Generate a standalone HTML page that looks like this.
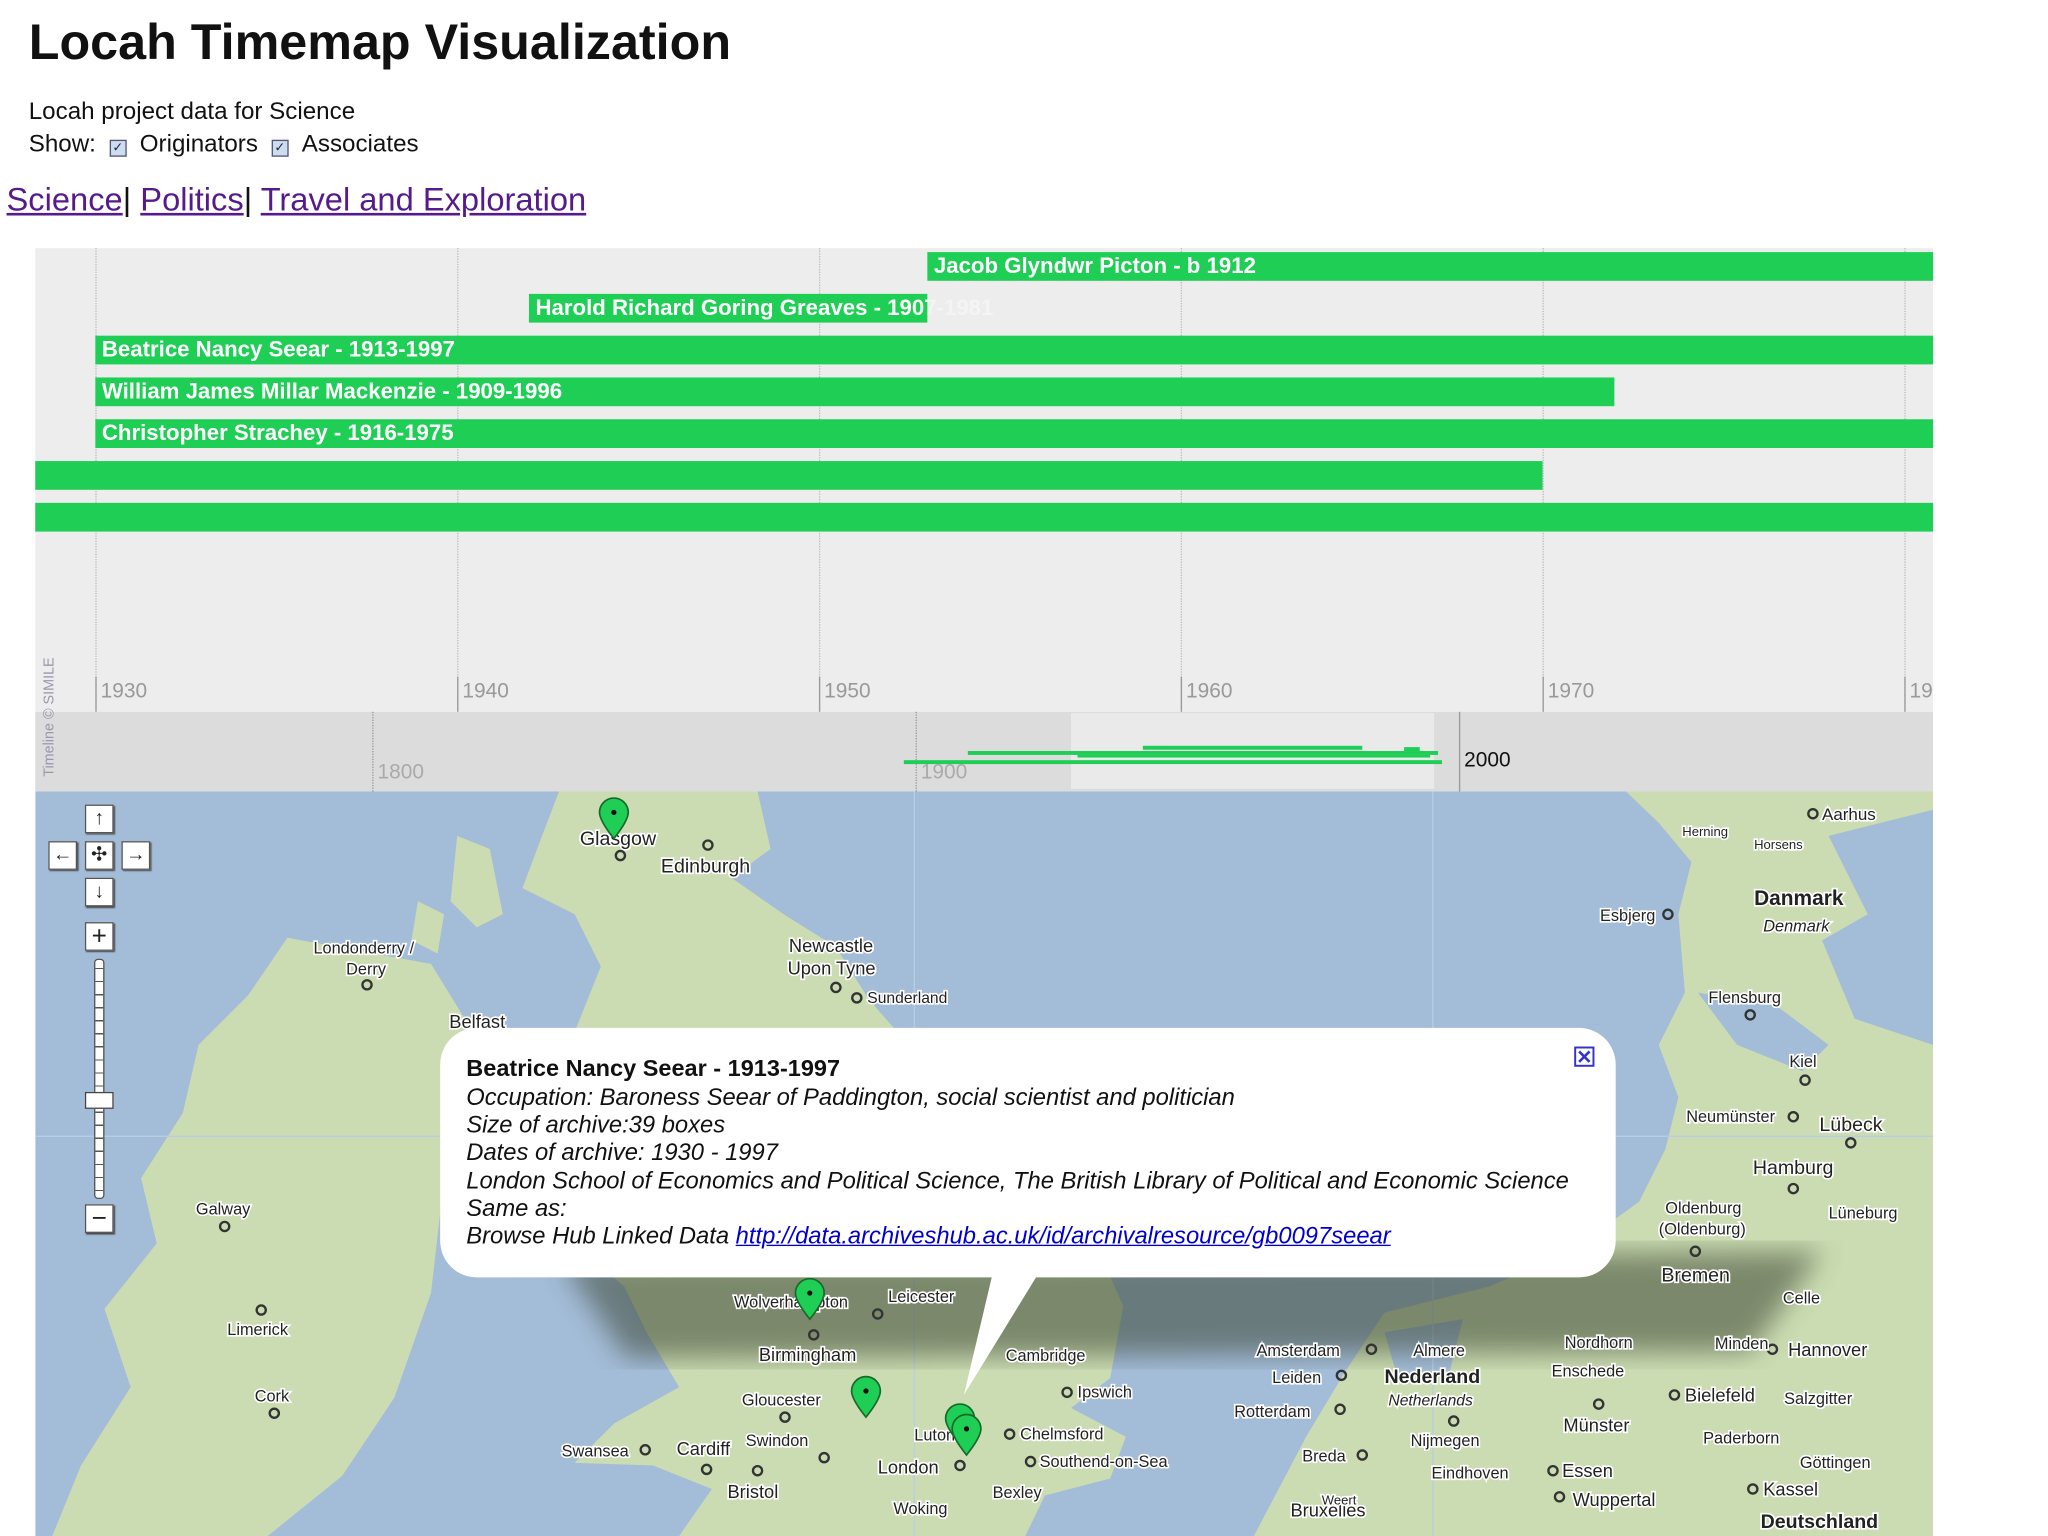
<!DOCTYPE html>
<html><head><meta charset="utf-8"><style>
html,body{margin:0;padding:0;background:#fff;overflow:hidden;width:2048px;height:1536px}
#w{position:absolute;left:0;top:0;width:1568px;height:1176px;transform:scale(1.30612);transform-origin:0 0;font-family:"Liberation Sans",sans-serif;color:#111}
.a{position:absolute;white-space:nowrap}
.bar{position:absolute;height:22px;background:#1fce55;color:#fff;font-size:17px;font-weight:bold;line-height:22px;padding-left:5px;box-sizing:border-box;white-space:nowrap}
.g{position:absolute;top:190px;height:355px;border-left:1px dotted #bbb}
.yl{position:absolute;top:518px;height:27px;border-left:1px solid #999;color:#999;font-size:16px;padding-left:3px;line-height:24px}
.btn{position:absolute;width:20px;height:20px;border:1px solid #555;background:#fff;box-shadow:1px 1px 1px #444;font-size:15px;line-height:20px;text-align:center;color:#222}
.c{font-size:12.5px;fill:#222;stroke:#fff;stroke-width:2.5px;paint-order:stroke}
.p{position:absolute;font-size:18.2px;font-style:italic;line-height:21px}
</style></head><body><div id="w">
<div class="a" style="left:22px;top:11px;font-size:38.5px;font-weight:bold">Locah Timemap Visualization</div>
<div class="a" style="left:22px;top:74px;font-size:18.5px">Locah project data for Science</div>
<div class="a" style="left:22px;top:99px;font-size:18.5px">Show: &nbsp;<span style="display:inline-block;width:11px;height:11px;border:1px solid #557;background:#cde;vertical-align:0px;font-size:10px;line-height:11px;text-align:center;color:#225">✓</span> &nbsp;Originators &nbsp;<span style="display:inline-block;width:11px;height:11px;border:1px solid #557;background:#cde;vertical-align:0px;font-size:10px;line-height:11px;text-align:center;color:#225">✓</span> &nbsp;Associates</div>
<div class="a" style="left:5px;top:139px;font-size:25px;color:#551a8b"><u>Science</u><span style="color:#111">|</span> <u>Politics</u><span style="color:#111">|</span> <u>Travel and Exploration</u></div>

<div class="a" style="left:27px;top:190px;width:1453px;height:355px;background:#ededed"></div>
<div class="g" style="left:73px"></div><div class="g" style="left:350px"></div><div class="g" style="left:627px"></div><div class="g" style="left:904px"></div><div class="g" style="left:1181px"></div><div class="g" style="left:1458px"></div>
<div class="yl" style="left:73px">1930</div><div class="yl" style="left:350px">1940</div><div class="yl" style="left:627px">1950</div><div class="yl" style="left:904px">1960</div><div class="yl" style="left:1181px">1970</div><div class="yl" style="left:1458px;width:20px;overflow:hidden">19</div>
<div class="bar" style="left:710px;top:193px;width:770px">Jacob Glyndwr Picton - b 1912</div>
<div class="bar" style="left:405px;top:225px;width:305px;overflow:visible">Harold Richard Goring Greaves - 19<span style="color:#f4f4f4">07-1981</span></div>
<div class="bar" style="left:73px;top:257px;width:1407px">Beatrice Nancy Seear - 1913-1997</div>
<div class="bar" style="left:73px;top:289px;width:1163px">William James Millar Mackenzie - 1909-1996</div>
<div class="bar" style="left:73px;top:321px;width:1407px">Christopher Strachey - 1916-1975</div>
<div class="bar" style="left:27px;top:353px;width:1154px"></div>
<div class="bar" style="left:27px;top:385px;width:1453px"></div>

<div class="a" style="left:27px;top:545px;width:1453px;height:61px;background:#dcdcdc"></div>
<div class="a" style="left:820px;top:546px;width:278px;height:58px;background:#eaeaea"></div>
<div class="yl" style="left:285px;top:545px;height:61px;line-height:94px;border-left:1px dotted #999;color:#aaa">1800</div>
<div class="yl" style="left:701px;top:545px;height:61px;line-height:94px;border-left:1px dotted #999;color:#aaa">1900</div>
<div class="yl" style="left:1117px;top:545px;height:61px;line-height:76px;border-left:1px solid #999;color:#111">2000</div>
<div class="a" style="left:692px;top:582px;width:412px;height:3px;background:#1fce55"></div>
<div class="a" style="left:741px;top:575px;width:360px;height:3px;background:#1fce55"></div>
<div class="a" style="left:825px;top:578px;width:270px;height:2px;background:#1fce55"></div>
<div class="a" style="left:875px;top:571px;width:168px;height:3px;background:#1fce55"></div>
<div class="a" style="left:1075px;top:572px;width:12px;height:3px;background:#1fce55"></div>
<div class="a" style="left:-17px;top:543px;font-size:11px;color:#99a;transform:rotate(-90deg);width:110px;text-align:center">Timeline © SIMILE</div>

<svg class="a" style="left:27px;top:606px" width="1453" height="570" viewBox="27 606 1453 570">
<defs><filter id="bl"><feGaussianBlur stdDeviation="10"/></filter></defs>
<rect x="27" y="606" width="1453" height="570" fill="#a3bcd8"/>
<path d="M428 606 L580 606 L590 650 L560 672 L600 700 L640 725 L665 765 L700 805 L725 860 L785 905 L840 955 L860 1000 L850 1055 L820 1078 L862 1100 L850 1132 L800 1145 L785 1176 L520 1176 L545 1140 L500 1122 L440 1120 L470 1090 L520 1062 L495 1020 L478 985 L430 945 L468 905 L445 862 L402 822 L440 790 L460 740 L440 700 L400 680 L415 640 Z" fill="#cbdcb2"/>
<path d="M350 640 L375 650 L385 700 L365 710 L345 690 Z M320 690 L340 700 L335 730 L315 720 Z" fill="#cbdcb2"/>
<path d="M220 718 L330 738 L362 790 L346 852 L338 920 L330 990 L302 1070 L262 1130 L205 1176 L40 1176 L62 1122 L100 1062 L80 1002 L120 952 L108 902 L140 852 L152 800 L190 762 Z" fill="#cbdcb2"/>
<path d="M1245 606 L1480 606 L1480 1176 L960 1176 L1000 1100 L1030 1050 L1060 1005 L1140 985 L1200 960 L1255 920 L1275 880 L1285 840 L1270 800 L1290 760 L1285 700 L1295 660 L1270 630 Z" fill="#cbdcb2"/>
<path d="M1400 640 L1480 620 L1480 800 L1420 780 L1395 720 L1430 700 Z" fill="#a3bcd8"/>
<path d="M1300 760 L1360 770 L1400 800 L1380 820 L1330 800 Z" fill="#a3bcd8"/>
<path d="M1060 1020 L1120 1010 L1110 1050 L1070 1055 Z" fill="#a3bcd8"/>
<line x1="27" y1="870" x2="1480" y2="870" stroke="#b8cde4" stroke-width="1"/>
<line x1="700" y1="606" x2="700" y2="1176" stroke="#b8cde4" stroke-width="1"/>
<line x1="1097" y1="606" x2="1097" y2="1176" stroke="#b8cde4" stroke-width="1"/>
<path d="M430 965 L1395 958 L1340 1035 L480 1040 Z" fill="#3a4432" opacity="0.55" filter="url(#bl)"/>
<g fill="none" stroke="#333" stroke-width="1.8">
<circle cx="475" cy="655" r="3.5"/><circle cx="542" cy="647" r="3.5"/><circle cx="281" cy="754" r="3.5"/><circle cx="640" cy="756" r="3.5"/><circle cx="656" cy="764" r="3.5"/><circle cx="172" cy="939" r="3.5"/><circle cx="200" cy="1003" r="3.5"/><circle cx="210" cy="1082" r="3.5"/><circle cx="623" cy="1022" r="3.5"/><circle cx="672" cy="1006" r="3.5"/><circle cx="601" cy="1085" r="3.5"/><circle cx="494" cy="1110" r="3.5"/><circle cx="541" cy="1125" r="3.5"/><circle cx="580" cy="1126" r="3.5"/><circle cx="631" cy="1116" r="3.5"/><circle cx="735" cy="1122" r="3.5"/><circle cx="773" cy="1098" r="3.5"/><circle cx="789" cy="1119" r="3.5"/><circle cx="817" cy="1066" r="3.5"/><circle cx="1277" cy="700" r="3.5"/><circle cx="1388" cy="623" r="3.5"/><circle cx="1340" cy="777" r="3.5"/><circle cx="1382" cy="827" r="3.5"/><circle cx="1373" cy="855" r="3.5"/><circle cx="1417" cy="875" r="3.5"/><circle cx="1373" cy="910" r="3.5"/><circle cx="1298" cy="958" r="3.5"/><circle cx="1050" cy="1033" r="3.5"/><circle cx="1027" cy="1053" r="3.5"/><circle cx="1026" cy="1079" r="3.5"/><circle cx="1043" cy="1114" r="3.5"/><circle cx="1113" cy="1088" r="3.5"/><circle cx="1224" cy="1075" r="3.5"/><circle cx="1282" cy="1068" r="3.5"/><circle cx="1357" cy="1033" r="3.5"/><circle cx="1189" cy="1126" r="3.5"/><circle cx="1194" cy="1146" r="3.5"/><circle cx="1342" cy="1140" r="3.5"/>
</g>
<g class="c">
<text x="444" y="647" font-size="15">Glasgow</text><text x="506" y="668" font-size="15">Edinburgh</text>
<text x="240" y="730">Londonderry /</text><text x="265" y="746">Derry</text>
<text x="604" y="729" font-size="14">Newcastle</text><text x="603" y="746" font-size="14">Upon Tyne</text><text x="664" y="768" font-size="12">Sunderland</text>
<text x="344" y="787" font-size="14">Belfast</text><text x="150" y="930">Galway</text><text x="174" y="1022">Limerick</text><text x="195" y="1073">Cork</text>
<text x="562" y="1001">Wolverhampton</text><text x="680" y="997">Leicester</text><text x="581" y="1042" font-size="14">Birmingham</text><text x="770" y="1042">Cambridge</text>
<text x="568" y="1076">Gloucester</text><text x="430" y="1115">Swansea</text><text x="518" y="1114" font-size="14">Cardiff</text><text x="571" y="1107">Swindon</text><text x="557" y="1147" font-size="14">Bristol</text>
<text x="672" y="1128" font-size="14">London</text><text x="700" y="1103">Luton</text><text x="781" y="1102">Chelmsford</text><text x="796" y="1123">Southend-on-Sea</text><text x="760" y="1147">Bexley</text><text x="684" y="1159">Woking</text><text x="825" y="1070">Ipswich</text>
<text x="1395" y="628" font-size="13">Aarhus</text><text x="1288" y="640" font-size="10">Herning</text><text x="1343" y="650" font-size="10">Horsens</text><text x="1225" y="705">Esbjerg</text>
<text x="1343" y="693" font-size="16" font-weight="bold">Danmark</text><text x="1350" y="713" font-style="italic">Denmark</text>
<text x="1308" y="768">Flensburg</text><text x="1370" y="817">Kiel</text><text x="1291" y="859">Neumünster</text><text x="1393" y="866" font-size="15">Lübeck</text><text x="1342" y="899" font-size="15">Hamburg</text>
<text x="1275" y="929">Oldenburg</text><text x="1270" y="945">(Oldenburg)</text><text x="1400" y="933">Lüneburg</text><text x="1272" y="981" font-size="15">Bremen</text><text x="1365" y="998">Celle</text>
<text x="962" y="1038">Amsterdam</text><text x="1082" y="1038">Almere</text><text x="1198" y="1032">Nordhorn</text><text x="974" y="1059">Leiden</text><text x="945" y="1085">Rotterdam</text>
<text x="1060" y="1059" font-size="15" font-weight="bold">Nederland</text><text x="1063" y="1076" font-style="italic" font-size="12">Netherlands</text><text x="1188" y="1054">Enschede</text><text x="1369" y="1038" font-size="14">Hannover</text><text x="1313" y="1033">Minden</text>
<text x="1290" y="1073" font-size="14">Bielefeld</text><text x="1366" y="1075">Salzgitter</text><text x="1197" y="1096" font-size="14">Münster</text><text x="1080" y="1107">Nijmegen</text><text x="997" y="1119">Breda</text>
<text x="1304" y="1105">Paderborn</text><text x="1096" y="1132">Eindhoven</text><text x="1196" y="1131" font-size="14">Essen</text><text x="1378" y="1124">Göttingen</text><text x="1204" y="1153" font-size="14">Wuppertal</text><text x="1350" y="1145" font-size="14">Kassel</text>
<text x="988" y="1161" font-size="14">Bruxelles</text><text x="1348" y="1170" font-size="15" font-weight="bold">Deutschland</text><text x="1012" y="1152" font-size="10">Weert</text>
</g>
<g fill="#1fce55" stroke="#186a2a" stroke-width="1.3">
<path d="M470 642 C462 632 459 626 459 622 A11 11 0 0 1 481 622 C481 626 478 632 470 642 Z"/>
<path d="M620 1010 C612 1000 609 994 609 990 A11 11 0 0 1 631 990 C631 994 628 1000 620 1010 Z"/>
<path d="M663 1085 C655 1075 652 1069 652 1065 A11 11 0 0 1 674 1065 C674 1069 671 1075 663 1085 Z"/>
<path d="M735 1106 C727 1096 724 1090 724 1086 A11 11 0 0 1 746 1086 C746 1090 743 1096 735 1106 Z"/>
<path d="M740 1114 C732 1104 729 1098 729 1094 A11 11 0 0 1 751 1094 C751 1098 748 1104 740 1114 Z"/>
</g>
<g fill="#111"><circle cx="470" cy="622" r="2"/><circle cx="620" cy="990" r="2"/><circle cx="663" cy="1065" r="2"/><circle cx="740" cy="1094" r="2"/></g>
<path d="M760 975 L795 975 L738 1068 Z" fill="#fff"/>
<rect x="337" y="787" width="900" height="191" rx="28" fill="#fff"/>
<rect x="1206" y="802" width="14" height="14" fill="#fff" stroke="#33c" stroke-width="1.5"/>
<path d="M1209 805 L1217 813 M1217 805 L1209 813" stroke="#33c" stroke-width="2"/>
</svg>

<div class="a" style="left:357px;top:808px;font-size:18px;font-weight:bold">Beatrice Nancy Seear - 1913-1997</div>
<div class="p" style="left:357px;top:830px">Occupation: Baroness Seear of Paddington, social scientist and politician</div>
<div class="p" style="left:357px;top:851px">Size of archive:39 boxes</div>
<div class="p" style="left:357px;top:872px">Dates of archive: 1930 - 1997</div>
<div class="p" style="left:357px;top:894px">London School of Economics and Political Science, The British Library of Political and Economic Science</div>
<div class="p" style="left:357px;top:915px">Same as:</div>
<div class="p" style="left:357px;top:936px">Browse Hub Linked Data <u style="color:#00c">http://data.archiveshub.ac.uk/id/archivalresource/gb0097seear</u></div>

<div class="btn" style="left:65px;top:616px">↑</div>
<div class="btn" style="left:37px;top:644px">←</div>
<div class="btn" style="left:65px;top:644px">✣</div>
<div class="btn" style="left:93px;top:644px">→</div>
<div class="btn" style="left:65px;top:672px">↓</div>
<div class="btn" style="left:65px;top:706px;font-size:20px">+</div>
<div class="a" style="left:72px;top:734px;width:6px;height:182px;border:1px solid #555;border-radius:3px;background:repeating-linear-gradient(#fff 0 6px,#555 6px 7px,#fff 7px 10px)"></div>
<div class="a" style="left:65px;top:836px;width:20px;height:11px;background:#fff;border:1px solid #444"></div>
<div class="btn" style="left:65px;top:922px;font-size:20px">−</div>
</div></body></html>
